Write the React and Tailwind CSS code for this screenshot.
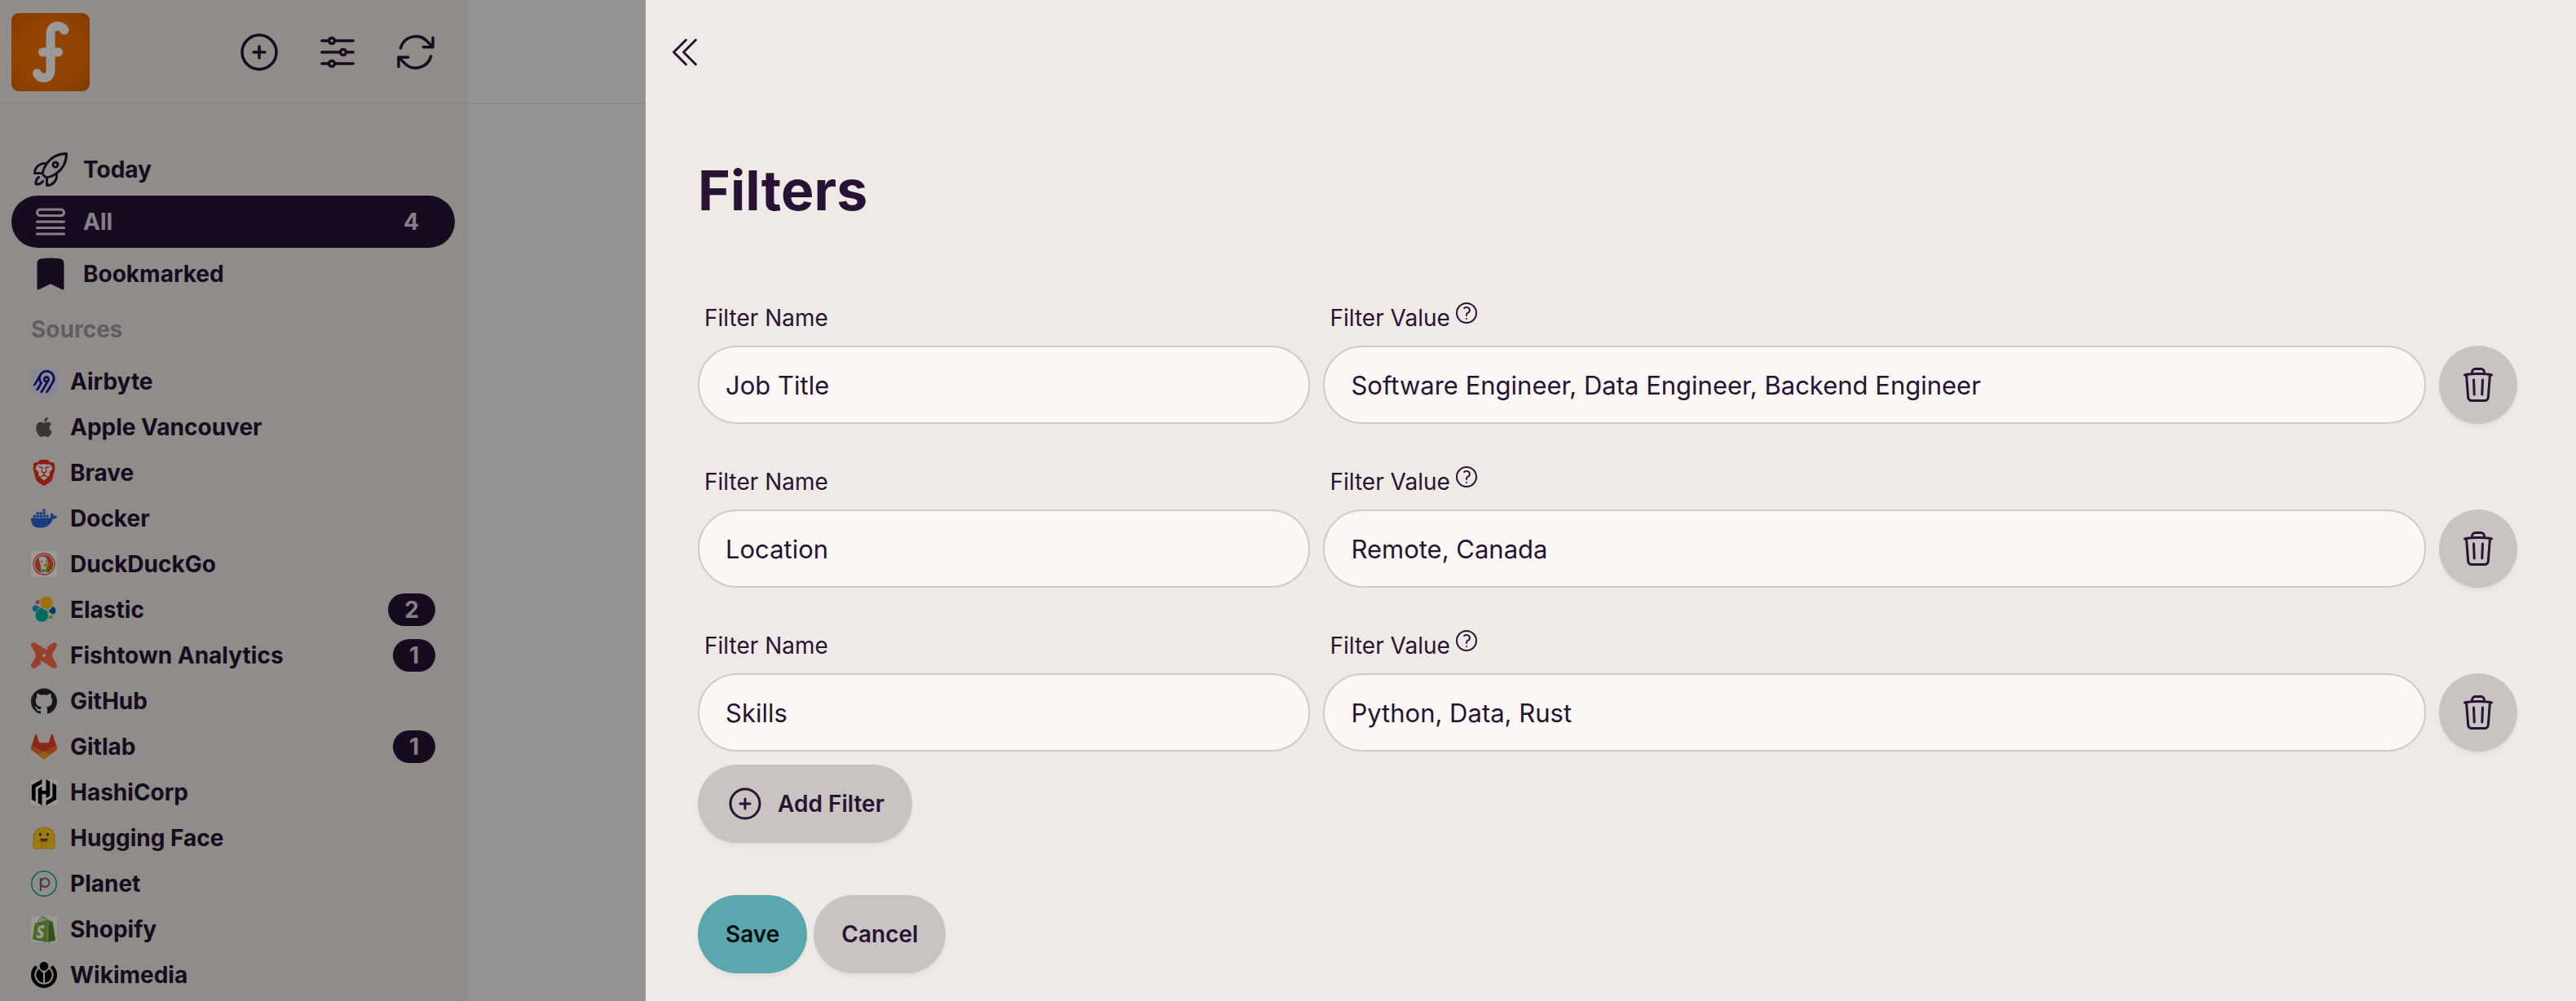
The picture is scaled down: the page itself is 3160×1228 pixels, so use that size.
import React from "react";
import {
  HiBookmark,
  HiOutlineAdjustmentsHorizontal,
  HiOutlineArrowPath,
  HiOutlineChevronDoubleLeft,
  HiOutlinePlusCircle,
  HiOutlineQuestionMarkCircle,
  HiOutlineQueueList,
  HiOutlineRocketLaunch,
  HiOutlineTrash,
} from "react-icons/hi2";
import {
  SiAirbyte,
  SiApple,
  SiBrave,
  SiDocker,
  SiGithub,
  SiHashicorp,
  SiShopify,
  SiWikimediafoundation,
} from "react-icons/si";

function BrandMark() {
  return (
    <svg viewBox="0 0 96 96" className="size-24" aria-hidden="true">
      <defs>
        <radialGradient id="brand" cx="0.5" cy="0.5" r="0.7">
          <stop offset="0.6" stopColor="#f37100" />
          <stop offset="1" stopColor="#d96200" />
        </radialGradient>
      </defs>
      <rect width="96" height="96" rx="9" fill="url(#brand)" />
      <g fill="none" stroke="#fff" strokeWidth="11" strokeLinecap="round">
        <path d="M65 21C63 17.500 60 16 56 16C51 16 48 20 48 26V70C48 76 45 79.500 40 79.500C36 79.500 33 77 31.500 74" />
        <path d="M38.500 48H57.500" />
      </g>
    </svg>
  );
}

function AirbyteLogo() {
  return (
    <span className="flex size-8 items-center justify-center rounded bg-[#e3e1fb] text-[#1b1587]">
      <SiAirbyte className="size-7" />
    </span>
  );
}

function DuckLogo() {
  return (
    <svg viewBox="0 0 32 32" className="size-8">
      <rect width="32" height="32" fill="#fff" />
      <circle cx="16" cy="16" r="13" fill="#fff" stroke="#de5833" strokeWidth="1.300" />
      <circle cx="16" cy="16" r="11.300" fill="#de5833" />
      <path d="M9.500 8.500C11 6.500 14 5.800 16.500 7C19.500 8 20.500 10.500 20.300 13.500L19 20L19.500 26.700Q15 27.500 12.500 26Q13 19 10.500 13Z" fill="#fff" />
      <path d="M15.500 16.500Q17 14.800 20 15.200L23.500 15.200Q22.500 17 19.500 17.200Q22.500 17.800 21.500 18.800Q17.500 20.500 15.500 18.500Z" fill="#fdb813" />
      <path d="M13.500 22L16.500 23L20.800 21.500V26L17 25L13.500 26Z" fill="#4cba3c" />
      <circle cx="13.200" cy="12.800" r="1" fill="#2d4f8e" />
      <circle cx="18.500" cy="12.300" r="0.800" fill="#2d4f8e" />
    </svg>
  );
}

function ElasticLogo() {
  return (
    <svg viewBox="0 0 32 32" className="size-8">
      <g stroke="#fff" strokeWidth="0.800">
        <path d="M5 8.500C5 4 8.500 2.800 11.500 4.400L10.400 9.800L5.500 9Z" fill="#ee4f97" />
        <path d="M5.500 9.800L11.500 12L8 19.800C-1 19 -0.500 10.500 5.500 9.800Z" fill="#22a0dd" />
        <path d="M26.600 11.500C32.300 13.200 32.600 20.300 26.800 22.300L20.800 18Z" fill="#0b62af" />
        <path d="M20.800 23L26.800 22.600C28.500 26.500 24 29 20.500 27.200Z" fill="#91c73e" />
        <path d="M11.500 12L10.800 6.500A8.300 8.300 0 1 1 26.300 11.500L20.500 16.700Z" fill="#fdc010" />
        <path d="M11.600 12.500L20.500 17.200L21 20A8.300 8.300 0 1 1 5.400 20.200Z" fill="#00b4a0" />
      </g>
    </svg>
  );
}

function FishtownLogo() {
  return (
    <svg viewBox="0 0 32 32" className="size-8">
      <path
        fillRule="evenodd"
        fill="#ff694a"
        d="M1 1.200Q3 -0.800 5.500 0.700L17 8L20.800 9.800L19.400 6.200L26.500 0.800Q29.200 -0.700 31 1.200Q32.700 3 31.200 5.400L26.600 13.500Q25.600 16 26.600 18.500L31.200 26.500Q32.700 29 31 30.800Q29 32.800 26.500 31.300L15 24L11.200 22.200L12.600 25.800L5.500 31.200Q2.800 32.700 1 30.800Q-0.700 29 0.800 26.600L5.400 18.500Q6.400 16 5.400 13.500L0.800 5.500Q-0.700 3 1 1.200ZM16 14Q18 14 18 16Q18 18 16 18Q14 18 14 16Q14 14 16 14Z"
      />
    </svg>
  );
}

function GitlabLogo() {
  return (
    <svg viewBox="0 0 32 32" className="size-8">
      <path d="M16 31.500L0.300 19.500Q-0.300 18 0.300 16.500L5 1.500Q6 0 7 1.500L10.300 11.300H21.700L25 1.500Q26 0 27 1.500L31.700 16.500Q32.300 18 31.700 19.500Z" fill="#e24329" />
      <path d="M16 31.500L0.300 19.500Q-0.300 18 0.600 14Q7 17 16 22.800Q25 17 31.400 14Q32.300 18 31.700 19.500Z" fill="#fc6d26" />
      <path d="M16 31.500L8.500 25.800Q12 24 16 21.500Q20 24 23.500 25.800Z" fill="#fca326" />
    </svg>
  );
}

function HashicorpLogo() {
  return (
    <span className="flex size-8 items-center justify-center bg-white text-black">
      <SiHashicorp className="size-8" />
    </span>
  );
}

function HuggingFaceLogo() {
  return (
    <svg viewBox="0 0 32 32" className="size-8">
      <circle cx="16" cy="16" r="13" fill="#ffd21e" stroke="#ff9d0b" strokeWidth="1.200" />
      <circle cx="11.500" cy="11.700" r="1.700" fill="#3a3b45" />
      <circle cx="20.500" cy="11.700" r="1.700" fill="#3a3b45" />
      <path d="M11.500 16Q16 18.500 20.500 16Q20.500 21 16 21Q11.500 21 11.500 16Z" fill="#3a3b45" />
      <path d="M13.500 19.500Q16 17.800 18.500 19.500Q17.500 21 16 21Q14.500 21 13.500 19.500Z" fill="#ef4e4e" />
      <g fill="#ffd21e" stroke="#ff9d0b" strokeWidth="1">
        <path d="M4.500 18.500Q6 17 7.500 19.500L9 21.500Q10 17.500 11.500 18.500Q12.500 20 12 22Q15 23 13.500 26.500Q12 29.500 8 29.300Q3.500 29.500 2.500 27L3 25.500L2 23.500L3.500 22.500L2.500 20.500Z" />
        <path d="M27.500 18.500Q26 17 24.500 19.500L23 21.500Q22 17.500 20.500 18.500Q19.500 20 20 22Q17 23 18.500 26.500Q20 29.500 24 29.300Q28.500 29.500 29.500 27L29 25.500L30 23.500L28.500 22.500L29.500 20.500Z" />
      </g>
    </svg>
  );
}

function PlanetLogo() {
  return (
    <svg viewBox="0 0 32 32" className="size-8">
      <circle cx="16" cy="16" r="15.300" fill="none" stroke="#009da5" strokeWidth="1.400" />
      <circle cx="17.200" cy="14.800" r="5.300" fill="none" stroke="#6a6c70" strokeWidth="2" />
      <path d="M11.900 9V25" stroke="#6a6c70" strokeWidth="2.200" />
    </svg>
  );
}

function ShopifyLogo() {
  return (
    <span className="flex size-8 items-center justify-center bg-white text-[#80b03c]">
      <span className="relative size-8">
        <SiShopify className="size-8" />
        <svg viewBox="0 0 24 24" className="absolute inset-0 size-8">
          <path d="M16.200 3.800L18 5.500L20 5.800L22.400 21.800L16.200 23.600Z" fill="#568837" />
        </svg>
      </span>
    </span>
  );
}

function BraveLogo() {
  return (
    <span className="relative flex size-8 items-center justify-center text-[#f0311a]">
      <svg viewBox="0 0 32 32" className="absolute inset-0 size-8">
        <path d="M8 6H24L26 12L22 21L16 26L10 21L6 12Z" fill="#fff" />
      </svg>
      <SiBrave className="relative size-8" />
    </span>
  );
}

const SOURCES = [
  { name: "Airbyte", logo: <AirbyteLogo /> },
  { name: "Apple Vancouver", logo: <SiApple className="size-6 text-[#5c5c5c]" /> },
  { name: "Brave", logo: <BraveLogo /> },
  { name: "Docker", logo: <SiDocker className="size-8 text-[#2a66d3]" /> },
  { name: "DuckDuckGo", logo: <DuckLogo /> },
  { name: "Elastic", logo: <ElasticLogo />, count: 2 },
  { name: "Fishtown Analytics", logo: <FishtownLogo />, count: 1 },
  { name: "GitHub", logo: <SiGithub className="size-8 text-[#24292e]" /> },
  { name: "Gitlab", logo: <GitlabLogo />, count: 1 },
  { name: "HashiCorp", logo: <HashicorpLogo /> },
  { name: "Hugging Face", logo: <HuggingFaceLogo /> },
  { name: "Planet", logo: <PlanetLogo /> },
  { name: "Shopify", logo: <ShopifyLogo /> },
  { name: "Wikimedia", logo: <SiWikimediafoundation className="size-8 text-black" /> },
];

const FILTERS = [
  { name: "Job Title", value: "Software Engineer, Data Engineer, Backend Engineer" },
  { name: "Location", value: "Remote, Canada" },
  { name: "Skills", value: "Python, Data, Rust" },
];

function ToolButton({ label, icon: Icon }) {
  return (
    <button type="button" aria-label={label} className="flex size-24 items-center justify-center rounded-full">
      <Icon className="size-14" />
    </button>
  );
}

function NavItem({ label, icon: Icon, active, count }) {
  return (
    <li>
      <a
        href="#"
        className={
          active
            ? "flex h-16 items-center gap-4 rounded-full bg-[#291334] px-6 text-[#dfd6e2]"
            : "flex h-16 items-center gap-4 rounded-full px-6"
        }
      >
        <Icon className="size-12" />
        <span className="flex-1">{label}</span>
        {count ? <span className="px-5">{count}</span> : null}
      </a>
    </li>
  );
}

function Sidebar() {
  return (
    <aside className="w-[574px] shrink-0 bg-[#efeae6]">
      <header className="flex h-32 items-center justify-between border-b-2 border-[#e3dfdb] pt-0.5 pr-4 pl-3.5">
        <a href="#" aria-label="Home">
          <BrandMark />
        </a>
        <div className="flex">
          <ToolButton label="Add source" icon={HiOutlinePlusCircle} />
          <ToolButton label="Filters" icon={HiOutlineAdjustmentsHorizontal} />
          <ToolButton label="Refresh" icon={HiOutlineArrowPath} />
        </div>
      </header>
      <nav className="pt-12 pr-4 pl-3.5 text-[28px] leading-10 font-bold">
        <ul>
          <NavItem label="Today" icon={HiOutlineRocketLaunch} />
          <NavItem label="All" icon={HiOutlineQueueList} active count={4} />
          <NavItem label="Bookmarked" icon={HiBookmark} />
        </ul>
        <h2 className="px-6 pt-4 pb-4 text-[#291334]/40">Sources</h2>
        <ul>
          {SOURCES.map((source) => (
            <li key={source.name}>
              <a href="#" className="flex h-14 items-center gap-4 px-6">
                <span className="flex size-8 items-center justify-center">{source.logo}</span>
                <span className="flex-1">{source.name}</span>
                {source.count ? (
                  <span className="rounded-full bg-[#291334] px-5 text-[#dfd6e2]">{source.count}</span>
                ) : null}
              </a>
            </li>
          ))}
        </ul>
      </nav>
    </aside>
  );
}

const FIELD =
  "h-24 w-full min-w-0 rounded-full border-2 border-[#cfcacd] bg-[#faf7f5] px-8 text-[31px] leading-10 outline-none";
const BUTTON = "flex h-24 items-center justify-center rounded-full text-[28px] leading-10 font-semibold shadow-md shadow-black/5";

function FilterRow({ filter, index }) {
  const nameId = `filter-name-${index}`;
  const valueId = `filter-value-${index}`;
  return (
    <div className="grid grid-cols-[5fr_9fr_96px] items-end gap-x-4">
      <div className="flex flex-col">
        <label htmlFor={nameId} className="px-2 pt-[3px] pb-3.5 text-[28px] leading-10">
          Filter Name
        </label>
        <input id={nameId} type="text" defaultValue={filter.name} className={FIELD} />
      </div>
      <div className="flex flex-col">
        <div className="flex gap-1 px-2 pt-[3px] pb-3.5 text-[28px] leading-10">
          <label htmlFor={valueId}>Filter Value</label>
          <button type="button" aria-label="About filter values" className="flex h-7 items-center">
            <HiOutlineQuestionMarkCircle className="size-8" />
          </button>
        </div>
        <input id={valueId} type="text" defaultValue={filter.value} className={FIELD} />
      </div>
      <button type="button" aria-label="Delete filter" className={`${BUTTON} w-24 bg-[#c9c4c1]`}>
        <HiOutlineTrash className="size-12" />
      </button>
    </div>
  );
}

export default function App() {
  return (
    <div className="relative flex h-screen overflow-hidden bg-[#faf7f5] font-[Inter,sans-serif] text-[#291334]">
      <Sidebar />
      <main className="flex-1">
        <div className="h-32 border-b-2 border-[#e7e4e2]" />
      </main>
      <div className="absolute inset-0 bg-black/40" />
      <section className="absolute inset-y-0 right-0 left-[792px] bg-[#efeae6]">
        <button type="button" aria-label="Close filters" className="mt-4 flex size-24 items-center justify-center rounded-full">
          <HiOutlineChevronDoubleLeft className="size-12" />
        </button>
        <form className="pr-[72px] pl-16" onSubmit={(event) => event.preventDefault()}>
          <h1 className="pt-[81px] text-[68px] leading-20 font-bold">Filters</h1>
          <div className="flex flex-col gap-12 pt-[94px]">
            {FILTERS.map((filter, index) => (
              <FilterRow key={filter.name} filter={filter} index={index} />
            ))}
          </div>
          <button type="button" className={`${BUTTON} mt-4 gap-4 bg-[#c9c4c1] px-[34px]`}>
            <HiOutlinePlusCircle className="size-12" />
            Add Filter
          </button>
          <div className="flex gap-2 pt-16">
            <button type="submit" className={`${BUTTON} bg-[#5aa8ad] px-[34px] text-[#020e0f]`}>
              Save
            </button>
            <button type="button" className={`${BUTTON} bg-[#c9c4c1] px-[34px]`}>
              Cancel
            </button>
          </div>
        </form>
      </section>
    </div>
  );
}
